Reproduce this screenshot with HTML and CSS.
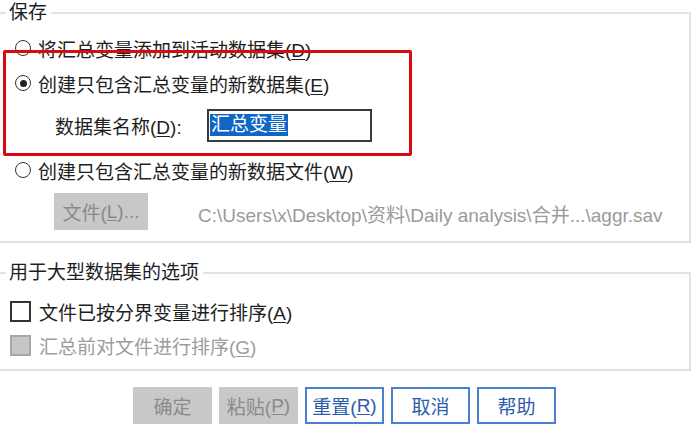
FILE: index.html
```html
<!DOCTYPE html>
<html lang="zh-CN">
<head>
    <meta charset="UTF-8">
    <title>汇总数据 - 保存</title>
    <link rel="stylesheet" href="styles.css">
</head>
<body>
    <!-- 保存 -->
    <fieldset class="group group-save">
        <legend>保存</legend>
        <div class="row row-first">
            <span class="radio"></span>
            <span>将汇总变量添加到活动数据集(<u>D</u>)</span>
        </div>
        <div class="highlight">
            <div class="row">
                <span class="radio checked"></span>
                <span>创建只包含汇总变量的新数据集(<u>E</u>)</span>
            </div>
            <div class="row row-name">
                <span class="label">数据集名称(<u>D</u>):</span>
                <div class="textbox"><span class="selected">汇总变量</span></div>
            </div>
        </div>
        <div class="row row-third">
            <span class="radio"></span>
            <span>创建只包含汇总变量的新数据文件(<u>W</u>)</span>
        </div>
        <div class="row row-file">
            <span class="btn btn-file">文件(<u>L</u>)...</span>
            <span class="path">C:\Users\x\Desktop\资料\Daily analysis\合并...\aggr.sav</span>
        </div>
    </fieldset>

    <!-- 大型数据集 -->
    <fieldset class="group group-large">
        <legend>用于大型数据集的选项</legend>
        <div class="row row-check">
            <span class="checkbox"></span>
            <span>文件已按分界变量进行排序(<u>A</u>)</span>
        </div>
        <div class="row row-check disabled">
            <span class="checkbox"></span>
            <span>汇总前对文件进行排序(<u>G</u>)</span>
        </div>
    </fieldset>

    <div class="buttons">
        <span class="btn btn-off">确定</span>
        <span class="btn btn-off">粘贴(<u>P</u>)</span>
        <span class="btn btn-on">重置(<u>R</u>)</span>
        <span class="btn btn-on">取消</span>
        <span class="btn btn-on">帮助</span>
    </div>
</body>
</html>
```

FILE: styles.css
```css
* {
    box-sizing: border-box;
}

body {
    margin: 0;
    background: #fff;
    color: #1e1e1e;
    font-family: "Liberation Sans", "Noto Sans CJK SC", sans-serif;
    font-size: 19px;
    overflow: hidden;
}

u {
    text-decoration-thickness: 1px;
    text-underline-offset: 2px;
}

/* 分组框 */
.group {
    margin: 0 9px 0 -2px;
    padding: 0;
    border: 2px solid #e3e3e3;
    min-width: 0;
}

.group legend {
    margin-left: 6px;
    padding: 0 4px 0 3px;
    height: 26px;
    line-height: 26px;
}

.group-save {
    padding-bottom: 11px;
}

.group-large {
    margin-top: 17px;
    padding-top: 8px;
    padding-bottom: 7px;
}

.row {
    display: flex;
    align-items: center;
    padding-left: 15px;
    height: 34px;
    white-space: nowrap;
}

.row-first {
    margin-top: 4px;
    height: 36px;
}

.row-name {
    height: 50px;
    padding-left: 55px;
}

.row-third {
    height: 40px;
}

.row-file {
    height: 40px;
    padding-left: 54px;
    padding-top: 3px;
    align-items: flex-start;
}

.row-check {
    padding-left: 10px;
}

/* 单选按钮 */
.radio {
    width: 16px;
    height: 16px;
    border: 1.6px solid #333;
    border-radius: 50%;
    margin-right: 7px;
    flex-shrink: 0;
    display: flex;
    align-items: center;
    justify-content: center;
}

.radio.checked::after {
    content: "";
    width: 7px;
    height: 7px;
    border-radius: 50%;
    background: #222;
}

/* 复选框 */
.checkbox {
    width: 21px;
    height: 21px;
    border: 2px solid #333;
    background: #fff;
    margin-right: 8px;
    flex-shrink: 0;
}

.disabled {
    color: #9c9c9c;
}

.disabled .checkbox {
    border-color: #a8a8a8;
    background: #c6c6c6;
}

/* 红色标注框 */
.highlight {
    position: relative;
}

.highlight::after {
    content: "";
    position: absolute;
    top: -16px;
    left: 3px;
    width: 403px;
    height: 100px;
    border: 3px solid #d60a10;
    border-radius: 2px;
}

.label {
    width: 152px;
}

.textbox {
    width: 165px;
    height: 33px;
    border: 2px solid #3a3a3a;
    background: #fff;
    display: flex;
    align-items: center;
    padding-left: 1px;
}

.selected {
    background: #0f66c4;
    color: #fff;
    line-height: 22px;
    padding: 0 1px;
}

/* 按钮 */
.btn {
    display: inline-flex;
    align-items: center;
    justify-content: center;
    height: 37px;
}

.btn-file {
    width: 94px;
    background: #c8c8c8;
    color: #8a8a8a;
}

.path {
    margin-left: 50px;
    margin-top: 7px;
    color: #9a9a9a;
    font-size: 19px;
}

.buttons {
    display: flex;
    gap: 7px;
    margin-top: 16px;
    padding-left: 133px;
}

.buttons .btn {
    width: 79px;
}

.btn-off {
    background: #c8c8c8;
    color: #8a8a8a;
}

.btn-on {
    background: #fff;
    border: 2px solid #4a80d0;
    color: #2c5cae;
}
```
